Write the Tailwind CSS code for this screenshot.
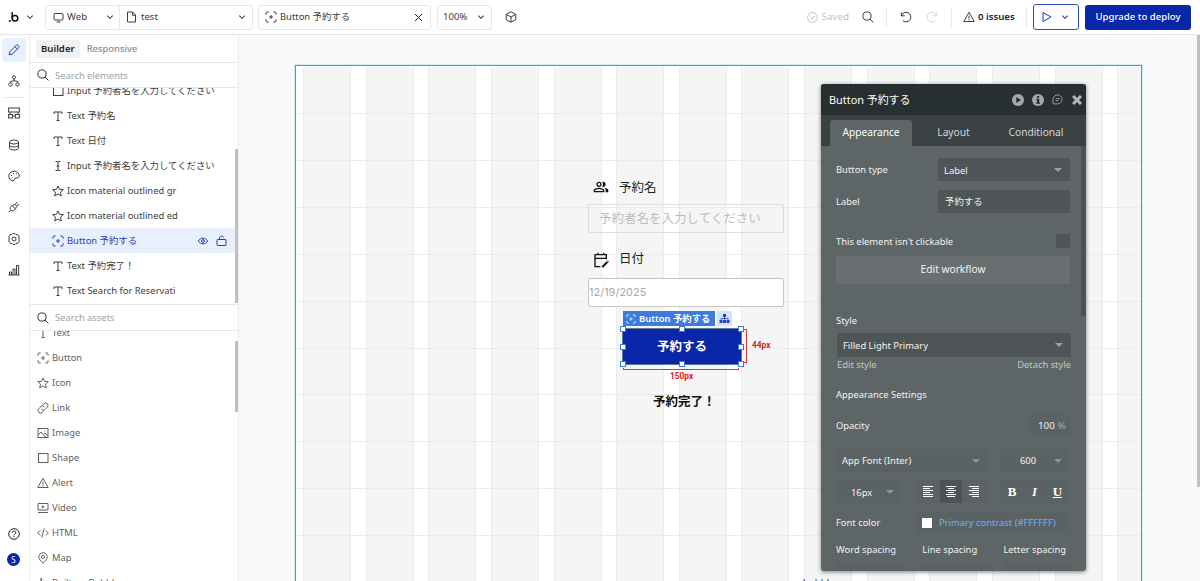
<!DOCTYPE html>
<html lang="ja">
<head>
  <meta charset="UTF-8" />
  <meta name="viewport" content="width=device-width, initial-scale=1.0" />
  <title>test | Editor</title>
  <script src="https://cdn.jsdelivr.net/npm/@tailwindcss/browser@4"></script>
</head>
<body class="w-[1200px] h-[581px] overflow-hidden bg-white text-[#3d3d3d] text-[9.600px] leading-none font-['Noto_Sans','Noto_Sans_CJK_JP',sans-serif]">

  <!-- Icon set -->
  <svg class="hidden">
    <symbol id="chevron" viewBox="0 0 8 8"><path d="M1.3 2.6 4 5.3l2.7-2.7" fill="none" stroke="currentColor" stroke-width="1.1" /></symbol>
    <symbol id="search" viewBox="0 0 12 12" fill="none" stroke="currentColor"><circle cx="5" cy="5" r="4.1" /><path d="m8 8 3.4 3.4" /></symbol>
    <symbol id="button" viewBox="0 0 12 12" fill="none" stroke="currentColor"><path d="M1 3.7V2a1 1 0 0 1 1-1h1.700M8.300 1H10a1 1 0 0 1 1 1v1.700M11 8.300V10a1 1 0 0 1-1 1H8.300M3.700 11H2a1 1 0 0 1-1-1V8.300M6 4v4M4 6h4" /></symbol>
    <symbol id="text" viewBox="0 0 12 12" fill="none" stroke="currentColor"><path d="M2 4V2h8v2M6 2v8.500M4.500 10.500h3" /></symbol>
    <symbol id="input" viewBox="0 0 12 12" fill="none" stroke="currentColor"><path d="M3.500 1.500H5l1 .7 1-.7h1.500M3.500 10.500H5l1-.7 1 .7h1.500M6 2v8M4.500 6h3" /></symbol>
    <symbol id="star" viewBox="0 0 12 12" fill="none" stroke="currentColor" stroke-linejoin="round"><path d="m6 .9 1.500 3.400 3.800.4-2.800 2.500.8 3.700L6 9l-3.300 1.900.8-3.700L.7 4.700l3.800-.4z" /></symbol>
    <symbol id="square" viewBox="0 0 12 12" fill="none" stroke="currentColor"><rect x="1.500" y="1.500" width="9.500" height="9" /></symbol>
    <symbol id="warning" viewBox="0 0 12 12" fill="none" stroke="currentColor" stroke-linejoin="round"><path d="m6 1.300 5.200 9.200H.8zM6 4.700v3M6 8.300v1" /></symbol>
  </svg>

  <!-- Top bar -->
  <header class="flex items-center h-[35px] border-b border-[#e6e6e6] relative">
    <div class="flex items-center w-[45px] pl-2 gap-[6px]">
      <svg class="w-3 h-3" viewBox="0 0 12 12" fill="none" stroke="#111" stroke-width="1.500"><circle cx="7" cy="7.300" r="2.800" /><path d="M4.200 1v6.500" /><circle cx="1.800" cy="10" r="1" fill="#111" stroke="none" /></svg>
      <svg class="w-2 h-2"><use href="#chevron" /></svg>
    </div>
    <div class="flex items-center w-[208px] h-[25px] border border-[#e8e8e8] rounded-[3px]">
      <div class="flex items-center w-[74px] h-full border-r border-[#e8e8e8] pl-[7px] pr-[5px]">
        <svg class="w-[11px] h-[11px]" viewBox="0 0 11 11" fill="none" stroke="currentColor"><rect x="1" y="1.500" width="9" height="6.500" rx="1" /><path d="M3.500 10h4" /></svg>
        <span class="ml-[3px] flex-1">Web</span>
        <svg class="w-2 h-2"><use href="#chevron" /></svg>
      </div>
      <div class="flex items-center flex-1 pl-[6px] pr-[6px]">
        <svg class="w-[11px] h-3" viewBox="0 0 11 12" fill="none" stroke="currentColor"><path d="M1.500 1h5L9.500 4v7h-8zM6.500 1v3.300h3" /></svg>
        <span class="ml-[4px] flex-1">test</span>
        <svg class="w-2 h-2"><use href="#chevron" /></svg>
      </div>
    </div>
    <div class="flex items-center w-[173px] h-[25px] ml-[5px] border border-[#e8e8e8] rounded-[3px] pl-[6px] pr-[7px]">
      <svg class="w-3 h-3"><use href="#button" /></svg>
      <span class="ml-[3px] flex-1 text-[9.400px]">Button 予約する</span>
      <svg class="w-[9px] h-[9px]" viewBox="0 0 9 9" stroke="#222"><path d="m1 1 7 7M8 1 1 8" /></svg>
    </div>
    <div class="flex items-center w-[55px] h-[25px] ml-[6px] border border-[#e8e8e8] rounded-[3px] pl-[5px] pr-[6px]">
      <span class="flex-1">100%</span>
      <svg class="w-2 h-2"><use href="#chevron" /></svg>
    </div>
    <svg class="w-3 h-3 ml-[13px]" viewBox="0 0 12 12" fill="none" stroke="currentColor" stroke-linejoin="round"><path d="m6 .8 4.800 2.500v5.400L6 11.200 1.200 8.700V3.300zM1.200 3.300 6 6l4.800-2.700M6 6v5" /></svg>

    <div class="flex items-center ml-auto pr-[9px]">
      <svg class="w-[11px] h-[11px] text-[#c2c2c2]" viewBox="0 0 11 11" fill="none" stroke="currentColor"><circle cx="5.500" cy="5.500" r="4.900" /><path d="m3.300 5.600 1.600 1.600 2.900-3.200" /></svg>
      <span class="ml-1 text-[#c2c2c2] text-[9.800px]">Saved</span>
      <svg class="w-3 h-3 ml-[13px]"><use href="#search" /></svg>
      <div class="w-px h-[19px] ml-3 bg-[#e8e8e8]"></div>
      <svg class="w-3 h-3 ml-[13px]" viewBox="0 0 12 12" fill="none" stroke="#333"><path d="M1.300 1.500v3.300h3.300M1.500 4.600A4.800 4.800 0 1 1 3 9.800" /></svg>
      <svg class="w-3 h-3 ml-[14px]" viewBox="0 0 12 12" fill="none" stroke="#d5d5d5"><path d="M10.700 1.500v3.300H7.400M10.500 4.600A4.800 4.800 0 1 0 9 9.800" /></svg>
      <div class="w-px h-[19px] ml-[13px] bg-[#e8e8e8]"></div>
      <svg class="w-3 h-3 ml-[11px]"><use href="#warning" /></svg>
      <span class="ml-[3px] font-semibold text-[#222] w-9 whitespace-nowrap">0 issues</span>
      <div class="w-px h-[19px] ml-[12px] bg-[#e8e8e8]"></div>
      <div class="flex items-center w-[46px] h-[26px] ml-[6px] border border-[#2c4dba] rounded-[3px] pl-[8px] text-[#1c3cb4]">
        <svg class="w-[10px] h-3" viewBox="0 0 10 12" fill="none" stroke="currentColor" stroke-linejoin="round"><path d="M1 1.500 9 6l-8 4.500z" /></svg>
        <svg class="w-2 h-2 ml-[9px]"><use href="#chevron" /></svg>
      </div>
      <div class="flex items-center justify-center w-[106px] h-[25px] ml-[6px] rounded-[3px] bg-[#0a26a8] text-white font-medium whitespace-nowrap">Upgrade to deploy</div>
    </div>
  </header>

  <div class="flex h-[546px]">
    <!-- Icon rail -->
    <nav class="flex flex-col items-center w-[30px] border-r border-[#ebebeb] shrink-0 pt-[3px] pr-[2px]">
      <div class="flex items-center justify-center w-6 h-6 rounded-[3px] bg-[#e8effd] text-[#2a3fb5]">
        <svg class="w-3 h-3" viewBox="0 0 12 12" fill="none" stroke="currentColor" stroke-linejoin="round"><path d="m1.200 10.800.5-3L8.300 1.300a1.200 1.200 0 0 1 1.700 0l.7.7a1.200 1.200 0 0 1 0 1.700l-6.500 6.500zM7 2.700 9.300 5" /></svg>
      </div>
      <svg class="w-3 h-3 mt-[13px]" viewBox="0 0 12 12" fill="none" stroke="currentColor"><circle cx="6" cy="2.300" r="1.500" /><circle cx="2.500" cy="9.500" r="1.700" /><circle cx="9.500" cy="9.500" r="1.700" /><path d="M6 4v2M2.500 7.800V6.500L6 5.700l3.500.8v1.300" /></svg>
      <div class="w-5 h-px mt-[10px] bg-[#e8e8e8]"></div>
      <svg class="w-3 h-3 mt-[9px]" viewBox="0 0 12 12" fill="none" stroke="currentColor"><rect x=".6" y="1" width="10.800" height="4" /><rect x=".6" y="7.500" width="4" height="3.500" /><rect x="7.400" y="7.500" width="4" height="3.500" /><path d="M2 7V5M10 7V5M5 9h2" /></svg>
      <svg class="w-3 h-3 mt-5" viewBox="0 0 12 12" fill="none" stroke="currentColor"><ellipse cx="6" cy="3" rx="4.500" ry="2" /><path d="M1.500 3v6c0 1.100 2 2 4.500 2s4.500-.9 4.500-2V3M1.500 6c0 1.100 2 2 4.500 2s4.500-.9 4.500-2" /></svg>
      <svg class="w-3 h-3 mt-[19px]" viewBox="0 0 12 12" fill="none" stroke="currentColor"><path d="M11.200 6.300C11.400 3.300 9.200 1.200 6.200 1.200S.8 3.300.8 6s2 4.800 4.200 4.800c1.800 0 1-1.700 1.900-2.500 1.200-1 3.700.6 4.300-2z" /><path d="M3 5.500h1M5 3.400h1M8 4h1M3.500 8h1" /></svg>
      <svg class="w-3 h-3 mt-[19px]" viewBox="0 0 12 12" fill="none" stroke="currentColor" stroke-linejoin="round"><path d="m.7 11.300 2-2M3.500 4 8 8.500M4 4.500l-1 1c-1.100 1.100-1.100 2.500-.1 3.600 1.100 1 2.500 1 3.600-.1l1-1M4.500 5l2-2 2.500 2.500-2 2M7.200 3.500l2-2.500M8.500 5l2.500-2" /></svg>
      <svg class="w-3 h-3 mt-5" viewBox="0 0 12 12" fill="none" stroke="currentColor" stroke-linejoin="round"><path d="m4 1.500.8-.9h2.400l.8.900 1.800.2 1.400 2.100-.4 1.200.4 1.200v2l-1.400 2.100L8 10.500l-.8.9H4.800L4 10.500l-1.800-.2L.8 8.200 1.200 6 .8 3.800l1.400-2.100z" /><circle cx="6" cy="6" r="2" /></svg>
      <svg class="w-3 h-3 mt-[19px]" viewBox="0 0 12 12" fill="none" stroke="currentColor"><path d="M1.500 11V8h2v3M5 11V5h2v6M8.500 11V1.500h2.200V11M.5 11h11" /></svg>
      <svg class="w-3 h-3 mt-auto" viewBox="0 0 12 12" fill="none" stroke="#222"><circle cx="6" cy="6" r="5.300" /><path d="M4.300 4.700a1.700 1.700 0 1 1 2.500 1.500c-.6.300-.8.500-.8 1.100M6 8.200v1.100" /></svg>
      <div class="flex items-center justify-center w-[13px] h-[13px] mt-[13px] mb-[15px] rounded-full bg-[#0a26a8] text-white text-[8px]">S</div>
    </nav>

    <!-- Element tree and assets -->
    <aside class="flex flex-col w-[209px] border-r border-[#ebebeb] shrink-0 text-[9.400px]">
      <div class="flex items-center h-[28px] border-b border-[#e8e8e8] pl-[6px] font-semibold shrink-0 text-[9.600px]">
        <span class="flex items-center h-[18px] px-[5px] rounded-[3px] bg-[#f1f1f1] text-[#222]">Builder</span>
        <span class="ml-[7px] text-[#8c8c8c] font-medium text-[9.400px] pt-px">Responsive</span>
      </div>
      <div class="flex items-center h-[25px] border-b border-[#e8e8e8] pl-[7px] text-[#a3a3a3] shrink-0">
        <svg class="w-3 h-3 text-[#333]"><use href="#search" /></svg>
        <span class="ml-[6px] pt-[2px]">Search elements</span>
      </div>
      <div class="flex h-[216px] overflow-hidden shrink-0">
        <div class="flex-1 -mt-[10px] whitespace-nowrap">
          <div class="flex items-center h-[25px] pl-[22px] gap-[3px]"><svg class="w-3 h-3"><use href="#square" /></svg>Input 予約者名を入力してください</div>
          <div class="flex items-center h-[25px] pl-[22px] gap-[3px]"><svg class="w-3 h-3"><use href="#text" /></svg>Text 予約名</div>
          <div class="flex items-center h-[25px] pl-[22px] gap-[3px]"><svg class="w-3 h-3"><use href="#text" /></svg>Text 日付</div>
          <div class="flex items-center h-[25px] pl-[22px] gap-[3px]"><svg class="w-3 h-3"><use href="#input" /></svg>Input 予約者名を入力してください</div>
          <div class="flex items-center h-[25px] pl-[22px] gap-[3px]"><svg class="w-3 h-3"><use href="#star" /></svg>Icon material outlined gr</div>
          <div class="flex items-center h-[25px] pl-[22px] gap-[3px]"><svg class="w-3 h-3"><use href="#star" /></svg>Icon material outlined ed</div>
          <div class="flex items-center h-[25px] pl-[22px] pr-[8px] gap-[3px] bg-[#e8effd] text-[#2a3fb5]">
            <svg class="w-3 h-3"><use href="#button" /></svg><span class="flex-1">Button 予約する</span>
            <svg class="w-[10px] h-[10px]" viewBox="0 0 10 10" fill="none" stroke="currentColor"><path d="M.4 5C2.300 1.200 7.700 1.200 9.600 5 7.700 8.800 2.300 8.800.4 5z" /><circle cx="5" cy="5" r="1.400" /></svg>
            <svg class="w-[11px] h-3 ml-[5px]" viewBox="0 0 11 12" fill="none" stroke="currentColor"><rect x="1" y="4.500" width="9" height="6" rx=".6" /><path d="M3.500 4.500V3c0-1.200.8-1.900 2-1.900S7.500 1.700 7.600 2.500" /></svg>
          </div>
          <div class="flex items-center h-[25px] pl-[22px] gap-[3px]"><svg class="w-3 h-3"><use href="#text" /></svg>Text 予約完了！</div>
          <div class="flex items-center h-[25px] pl-[22px] gap-[3px]"><svg class="w-3 h-3"><use href="#text" /></svg>Text Search for Reservati</div>
        </div>
        <div class="w-[3px] h-[154px] mt-[61px] bg-[#c1c1c1]"></div>
      </div>
      <div class="flex items-center h-[27px] border-y border-[#e8e8e8] pl-[7px] text-[#a3a3a3] shrink-0">
        <svg class="w-3 h-3 text-[#333]"><use href="#search" /></svg>
        <span class="ml-[6px] pt-px">Search assets</span>
      </div>
      <div class="flex flex-1 overflow-hidden text-[#5f5f5f]">
        <div class="flex-1 -mt-[11px]">
          <div class="flex items-center h-[25px] pl-[7px] gap-[3px]"><svg class="w-3 h-3"><use href="#text" /></svg>Text</div>
          <div class="flex items-center h-[25px] pl-[7px] gap-[3px]"><svg class="w-3 h-3"><use href="#button" /></svg>Button</div>
          <div class="flex items-center h-[25px] pl-[7px] gap-[3px]"><svg class="w-3 h-3"><use href="#star" /></svg>Icon</div>
          <div class="flex items-center h-[25px] pl-[7px] gap-[3px]"><svg class="w-3 h-3" viewBox="0 0 12 12" fill="none" stroke="currentColor"><path d="M5 3.500 6.800 1.700a2.400 2.400 0 0 1 3.500 3.400L8 7.400a2.400 2.400 0 0 1-3.500-.2M7 8.500l-1.800 1.800a2.400 2.400 0 0 1-3.500-3.400L4 4.600a2.400 2.400 0 0 1 3.500.2" /></svg>Link</div>
          <div class="flex items-center h-[25px] pl-[7px] gap-[3px]"><svg class="w-3 h-3" viewBox="0 0 12 12" fill="none" stroke="currentColor"><rect x="1" y="1.500" width="10" height="9" /><path d="m1 8 3-3 4.500 5M6.500 7.500 8 6l3 2.500M7.500 4h1" /></svg>Image</div>
          <div class="flex items-center h-[25px] pl-[7px] gap-[3px]"><svg class="w-3 h-3"><use href="#square" /></svg>Shape</div>
          <div class="flex items-center h-[25px] pl-[7px] gap-[3px]"><svg class="w-3 h-3"><use href="#warning" /></svg>Alert</div>
          <div class="flex items-center h-[25px] pl-[7px] gap-[3px]"><svg class="w-3 h-3" viewBox="0 0 12 12" fill="none" stroke="currentColor"><path d="M1 1.500h10V8H1zM1 10.500h10" /><path d="M4.800 3.200v3.200L7.600 4.800z" fill="currentColor" stroke="none" /></svg>Video</div>
          <div class="flex items-center h-[25px] pl-[7px] gap-[3px]"><svg class="w-3 h-3" viewBox="0 0 12 12" fill="none" stroke="currentColor"><path d="M3.200 3.500.7 6l2.500 2.500M8.800 3.500 11.300 6 8.800 8.500M7.300 1.500l-2.600 9" /></svg>HTML</div>
          <div class="flex items-center h-[25px] pl-[7px] gap-[3px]"><svg class="w-3 h-3" viewBox="0 0 12 12" fill="none" stroke="currentColor"><path d="M6 11.300C3.500 9 1.800 7 1.800 4.900a4.200 4.200 0 0 1 8.400 0C10.200 7 8.500 9 6 11.300z" /><circle cx="6" cy="4.900" r="1.600" /></svg>Map</div>
          <div class="flex items-center h-[25px] pl-[7px] gap-[3px]"><svg class="w-3 h-3" viewBox="0 0 12 12" fill="none" stroke="currentColor" stroke-width="1.500"><circle cx="7" cy="7.300" r="2.800" /><path d="M4.200 1v6.500" /></svg>Built on Bubble</div>
        </div>
        <div class="w-[3px] h-[71px] mt-[10px] bg-[#c1c1c1]"></div>
      </div>
    </aside>

    <!-- Canvas -->
    <main class="relative flex-1 overflow-hidden bg-[#fafafa]">
      <div class="relative w-[847px] h-[530px] ml-[56px] mt-[30px] border border-[#2fa5d3] shadow-[0_0_0_1px_#d3edf7] bg-white">
        <div class="flex h-full pl-[7px] gap-[14.63px] pt-px overflow-hidden">
          <div class="w-12 shrink-0 bg-[#f5f5f5] border-x border-[#ececec]"></div>
          <div class="w-12 shrink-0 bg-[#f5f5f5] border-x border-[#ececec]"></div>
          <div class="w-12 shrink-0 bg-[#f5f5f5] border-x border-[#ececec]"></div>
          <div class="w-12 shrink-0 bg-[#f5f5f5] border-x border-[#ececec]"></div>
          <div class="w-12 shrink-0 bg-[#f5f5f5] border-x border-[#ececec]"></div>
          <div class="w-12 shrink-0 bg-[#f5f5f5] border-x border-[#ececec]"></div>
          <div class="w-12 shrink-0 bg-[#f5f5f5] border-x border-[#ececec]"></div>
          <div class="w-12 shrink-0 bg-[#f5f5f5] border-x border-[#ececec]"></div>
          <div class="w-12 shrink-0 bg-[#f5f5f5] border-x border-[#ececec]"></div>
          <div class="w-12 shrink-0 bg-[#f5f5f5] border-x border-[#ececec]"></div>
          <div class="w-12 shrink-0 bg-[#f5f5f5] border-x border-[#ececec]"></div>
          <div class="w-12 shrink-0 bg-[#f5f5f5] border-x border-[#ececec]"></div>
          <div class="w-12 shrink-0 bg-[#f5f5f5] border-x border-[#ececec]"></div>
          <div class="w-12 shrink-0 bg-[#f5f5f5] border-x border-[#ececec]"></div>
        </div>
        <div class="absolute inset-x-0 top-px bottom-0 bg-[repeating-linear-gradient(to_bottom,transparent_0_45.920px,#ebebeb_45.920px_46.920px)]"></div>
      </div>

      <!-- Page elements -->
      <div class="absolute left-[349px] top-[142px] w-[196px] text-[#222] text-[12.500px] font-['Noto_Sans_CJK_JP',sans-serif]">
        <div class="flex items-center h-5 pl-[5px]">
          <svg class="w-4 h-4" viewBox="0 0 24 24" fill="#111"><path d="M16.670 13.130C18.040 14.060 19 15.320 19 17v3h4v-3c0-2.180-3.570-3.470-6.330-3.870zM15 12c2.210 0 4-1.790 4-4s-1.790-4-4-4c-.47 0-.91.1-1.330.24C14.500 5.270 15 6.580 15 8s-.5 2.730-1.330 3.760c.42.14.86.24 1.330.24zM9 12c2.210 0 4-1.790 4-4s-1.790-4-4-4-4 1.790-4 4 1.790 4 4 4zm0-6c1.100 0 2 .9 2 2s-.9 2-2 2-2-.9-2-2 .9-2 2-2zM9 13c-2.670 0-8 1.340-8 4v3h16v-3c0-2.660-5.330-4-8-4zm6 5H3v-.99C3.200 16.290 6.300 15 9 15s5.800 1.290 6 2v1z" /></svg>
          <span class="ml-[10px]">予約名</span>
        </div>
        <div class="flex items-center h-[29px] mt-[7px] pl-[10px] border border-[#dcdcdc] rounded-[2px] text-[#bdbdbd] whitespace-nowrap">予約者名を入力してください</div>
        <div class="flex items-center h-5 mt-[15px] pl-[5px]">
          <svg class="w-4 h-4 mt-[3px]" viewBox="0 0 24 24" fill="none" stroke="#111" stroke-width="2"><path d="M11 22H3V4h17v7M3 9.500h17M7.500 1v4M16 1v4" /><path d="m14 22.500 7.500-7.500" stroke-width="3" /><path d="m22 14.500 1-1" stroke-width="2.500" /></svg>
          <span class="ml-[10px]">日付</span>
        </div>
        <div class="flex items-center h-[29px] mt-[10px] border border-[#c6c6c6] rounded-[2px] bg-white text-[#aaa] text-[11px] font-[Inter,sans-serif]">12/19/2025</div>
      </div>

      <!-- Selected button -->
      <div class="absolute left-[384px] top-[276px] flex gap-[2px]">
        <div class="flex items-center w-[92px] h-[15px] pl-[3px] pt-px gap-[3px] bg-[#3c7ade] text-white text-[9.400px] font-semibold whitespace-nowrap"><svg class="w-[10px] h-[10px] shrink-0"><use href="#button" /></svg>Button 予約する</div>
        <div class="flex items-center justify-center w-[15px] h-[15px] bg-[#d5e2f8]">
          <svg class="w-[11px] h-[11px]" viewBox="0 0 11 11" fill="#2343c4"><path d="M4 1h3v3H4zM.5 7h3v3h-3zM4 7h3v3H4zM7.500 7h3v3h-3zM5.200 4h.7v3h-.7zM1.700 5.300h7.700V7h-.8V6H2.500v1h-.8z" /></svg>
        </div>
      </div>
      <div class="absolute left-[384px] top-[294px] w-[118px] h-[35px] flex items-center justify-center bg-[#0a26a8] outline outline-[#5a7f9e] rounded-[2px] text-white text-[12.500px] font-bold font-['Noto_Sans_CJK_JP',sans-serif]">予約する</div>
      <div class="absolute left-[381px] top-[291px] w-[124px] h-[41px] grid grid-cols-3 content-between">
        <i class="size-[6px] bg-white border border-[#3c7ade]"></i><i class="size-[6px] bg-white border border-[#3c7ade] justify-self-center"></i><i class="size-[6px] bg-white border border-[#3c7ade] justify-self-end"></i>
        <i class="size-[6px] bg-white border border-[#3c7ade]"></i><i></i><i class="size-[6px] bg-white border border-[#3c7ade] justify-self-end"></i>
        <i class="size-[6px] bg-white border border-[#3c7ade]"></i><i class="size-[6px] bg-white border border-[#3c7ade] justify-self-center"></i><i class="size-[6px] bg-white border border-[#3c7ade] justify-self-end"></i>
      </div>
      <div class="absolute left-[505px] top-[294px] w-[3px] h-[34px] border-r border-y border-[#d9363e]"></div>
      <div class="absolute left-[384px] top-[333px] w-[116px] h-[2px] border-b border-x border-[#d9363e]"></div>
      <div class="absolute left-[513px] top-[306px] text-[#e02020] text-[8.300px] leading-[8px] font-bold font-[Roboto,sans-serif]">44px</div>
      <div class="absolute left-[431px] top-[337px] text-[#e02020] text-[8.300px] leading-[8px] font-bold font-[Roboto,sans-serif]">150px</div>
      <div class="absolute left-[414px] top-[359px] text-[#111] text-[12.500px] leading-[13px] font-bold font-['Noto_Sans_CJK_JP',sans-serif] whitespace-nowrap">予約完了！</div>
      <div class="absolute left-[564px] top-[543px] text-[#333] leading-[10px]">bubble</div>

      <!-- Canvas scrollbar -->
      <div class="absolute right-0 top-0 w-[3px] h-[452px] bg-[#c1c1c1]"></div>

      <!-- Property editor -->
      <section class="absolute left-[582px] top-[49px] w-[265px] h-[487px] rounded-[3px] overflow-hidden shadow-[0_1px_4px_rgba(0,0,0,0.5)] bg-[#5e6566] text-[#f2f2f2] text-[9.400px] whitespace-nowrap">
        <div class="flex items-center h-[31px] pl-[8px] pr-[4px] bg-[#272f30] text-[10.900px] text-white">
          <span class="flex-1 pt-[2px]">Button 予約する</span>
          <svg class="w-3 h-3" viewBox="0 0 12 12"><circle cx="6" cy="6" r="6" fill="#a4a8a9" /><path d="M4.300 3v6l4.700-3z" fill="#272f30" /></svg>
          <svg class="w-3 h-3 ml-2" viewBox="0 0 12 12"><circle cx="6" cy="6" r="6" fill="#a4a8a9" /><path d="M5 2h2.200v1.800H5zM4.300 4.700h2.900v3.800h.8v1.200H4.200V8.500H5V5.900h-.7z" fill="#272f30" /></svg>
          <svg class="w-[11px] h-[11px] ml-2" viewBox="0 0 12 12" fill="none" stroke="#a4a8a9"><path d="M1.200 10.800V5.700A4.900 4.900 0 1 1 6.100 10.800zM4 5h4.300M4 7.200h3.200" /></svg>
          <svg class="w-[10px] h-[10px] ml-[9px]" viewBox="0 0 10 10" stroke="#b3b7b8" stroke-width="3"><path d="m1 1 8 8M9 1 1 9" /></svg>
        </div>
        <div class="flex items-end h-[31px] pl-[9px] bg-[#3b4042] text-[#d5d8d8] text-[10.200px]">
          <div class="flex items-center justify-center w-[82px] h-[26px] pb-px rounded-t-[3px] bg-[#5e6566] text-white">Appearance</div>
          <div class="flex items-center justify-center w-[83px] h-[26px] pb-px">Layout</div>
          <div class="flex items-center justify-center w-[82px] h-[26px] pb-px">Conditional</div>
        </div>
        <div class="relative h-[425px] pl-[15px] pr-4 overflow-hidden">
          <div class="absolute right-0 top-0 w-[5px] h-[170px] bg-[#4c5354]"></div>
          <div class="flex items-center h-[23px] mt-3">
            <span class="w-[102px] pt-px">Button type</span>
            <div class="flex items-center w-[132px] h-full pl-[6px] pr-2 bg-[#505657]"><span class="flex-1 pt-[2px]">Label</span><svg class="w-2 h-1" viewBox="0 0 8 4" fill="#9ba0a1"><path d="M0 0h8L4 4z" /></svg></div>
          </div>
          <div class="flex items-center h-[23px] mt-[9px]">
            <span class="w-[102px]">Label</span>
            <div class="flex items-center w-[132px] h-full pl-[7px] bg-[#505657]">予約する</div>
          </div>
          <div class="flex items-center justify-between h-[14px] mt-[21px]">
            <span class="pt-px">This element isn't clickable</span>
            <div class="w-[14px] h-[14px] bg-[#505657]"></div>
          </div>
          <div class="flex items-center justify-center h-[28px] mt-[8px] pb-px bg-[#696f70] text-[10.200px]">Edit workflow</div>
          <div class="h-[10px] mt-[32px]">Style</div>
          <div class="flex items-center w-[234px] h-6 mt-[7px] ml-px pl-[6px] pr-2 bg-[#4f5556]"><span class="flex-1 pt-[2px]">Filled Light Primary</span><svg class="w-2 h-1" viewBox="0 0 8 4" fill="#9ba0a1"><path d="M0 0h8L4 4z" /></svg></div>
          <div class="flex justify-between w-[234px] h-[10px] ml-px mt-[3px] text-[#c3c7c8]"><span>Edit style</span><span>Detach style</span></div>
          <div class="h-[10px] mt-[20px]">Appearance Settings</div>
          <div class="flex items-center h-[23px] mt-[14px]">
            <span class="flex-1">Opacity</span>
            <div class="flex items-center w-[40px] h-full pl-[8px] bg-[#5b6263] text-[9.800px]">100<span class="ml-[3px] text-[#a6abac]">%</span></div>
          </div>
          <div class="flex items-center justify-between h-[23px] mt-[12px]">
            <div class="flex items-center w-[152px] h-full pl-[6px] pr-2 bg-[#5b6263]"><span class="flex-1 pt-px">App Font (Inter)</span><svg class="w-2 h-1" viewBox="0 0 8 4" fill="#8f9596"><path d="M0 0h8L4 4z" /></svg></div>
            <div class="flex items-center w-[70px] h-full pl-[20px] pr-2 bg-[#5b6263]"><span class="flex-1 pt-px">600</span><svg class="w-2 h-1" viewBox="0 0 8 4" fill="#8f9596"><path d="M0 0h8L4 4z" /></svg></div>
          </div>
          <div class="flex items-center h-[23px] mt-[8px]">
            <div class="flex items-center w-[66px] h-full pl-[15px] pr-2 bg-[#5b6263]"><span class="flex-1 pt-[2px]">16px</span><svg class="w-2 h-1" viewBox="0 0 8 4" fill="#8f9596"><path d="M0 0h8L4 4z" /></svg></div>
            <div class="flex items-center w-[70px] h-full ml-[14px] bg-[#5b6263]">
              <div class="flex items-center justify-center w-6 h-full"><svg class="w-[10px] h-[11px]" viewBox="0 0 10 11" stroke="#fff" stroke-width="1"><path d="M0 .5h10M0 2.500h7M0 4.500h10M0 6.500h7M0 8.500h10M0 10.500h10" /></svg></div>
              <div class="flex items-center justify-center w-[22px] h-full bg-[#4d5354]"><svg class="w-[10px] h-[11px]" viewBox="0 0 10 11" stroke="#fff" stroke-width="1"><path d="M0 .5h10M2 2.500h6M0 4.500h10M2 6.500h6M0 8.500h10M1 10.500h8" /></svg></div>
              <div class="flex items-center justify-center w-6 h-full"><svg class="w-[10px] h-[11px]" viewBox="0 0 10 11" stroke="#fff" stroke-width="1"><path d="M0 .5h10M3 2.500h7M0 4.500h10M3 6.500h7M0 8.500h10M3 10.500h7" /></svg></div>
            </div>
            <div class="flex items-center justify-around w-[70px] h-full ml-[14px] bg-[#5b6263] text-[13px] text-white font-bold font-['Liberation_Serif',serif]">
              <span>B</span><span class="italic">I</span><span class="underline">U</span>
            </div>
          </div>
          <div class="flex items-center h-[23px] mt-[8px]">
            <span class="w-[80px] pt-px">Font color</span>
            <div class="flex items-center w-[154px] h-full pl-[6px] bg-[#5b6263] text-[#6cb1f5]"><i class="size-[10px] bg-white mr-[7px]"></i><span class="pt-px">Primary contrast (#FFFFFF)</span></div>
          </div>
          <div class="flex justify-between h-[10px] mt-[11px] pr-1"><span>Word spacing</span><span>Line spacing</span><span>Letter spacing</span></div>
          <div class="flex gap-[14px] mt-[8px]"><i class="w-[70px] h-6 bg-[#5a6162]"></i><i class="w-[70px] h-6 bg-[#5a6162]"></i><i class="w-[66px] h-6 bg-[#5a6162]"></i></div>
        </div>
      </section>
    </main>
  </div>
</body>
</html>
